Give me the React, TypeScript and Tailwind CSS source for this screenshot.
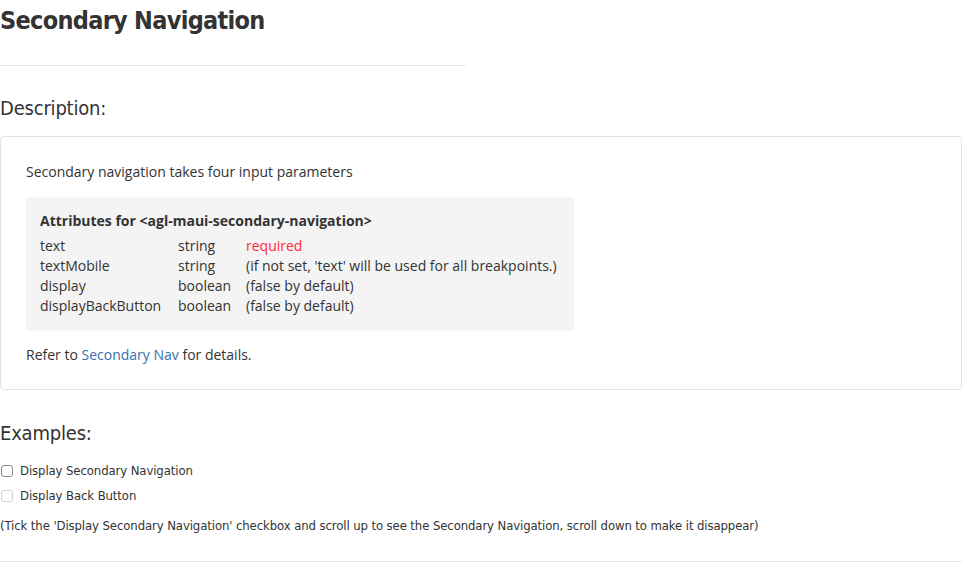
import React from "react";

export default function App() {
  const rows: [string, string, string, boolean][] = [
    ["text", "string", "required", true],
    ["textMobile", "string", "(if not set, 'text' will be used for all breakpoints.)", false],
    ["display", "boolean", "(false by default)", false],
    ["displayBackButton", "boolean", "(false by default)", false],
  ];
  return (
    <div className="w-[962px] bg-white text-[#333] font-['Open_Sans',sans-serif]">
      <div className="w-[466px]">
        <h1 className="pt-[4px] text-[25px] leading-[34px] tracking-[-0.7px] font-bold font-['DejaVu_Sans_Condensed',sans-serif]">
          Secondary Navigation
        </h1>
        <div className="mt-[27px] h-px bg-[#e6e6e6]" />
      </div>
      <h2 className="mt-[29px] text-[20px] leading-[26px] tracking-[-0.2px] font-['DejaVu_Sans_Condensed',sans-serif]">
        Description:
      </h2>
      <div className="mt-[15px] h-[254px] rounded-[4px] border border-[#e3e3e3] px-[25px] pt-[24px]">
        <p className="text-[14px] leading-[22px]">Secondary navigation takes four input parameters</p>
        <div className="mt-[14px] w-[548px] rounded-[4px] bg-[#f4f4f4] px-[14px] pt-[13px] pb-[15px] text-[14px] leading-[20px]">
          <div className="font-bold leading-[22px] mb-[4px]">Attributes for &lt;agl-maui-secondary-navigation&gt;</div>
          {rows.map(([a, b, c, r]) => (
            <div key={a} className="flex">
              <span className="w-[138px]">{a}</span>
              <span className="w-[68px]">{b}</span>
              <span className={r ? "text-[#ff2a3a]" : ""}>{c}</span>
            </div>
          ))}
        </div>
        <p className="mt-[13px] text-[14px] leading-[22px]">
          Refer to <a className="text-[#3a6fb0]">Secondary Nav</a> for details.
        </p>
      </div>
      <h2 className="mt-[30px] text-[20px] leading-[26px] tracking-[-0.2px] font-['DejaVu_Sans_Condensed',sans-serif]">
        Examples:
      </h2>
      <div className="mt-[12px] text-[13px] leading-[18px] tracking-[-0.1px] font-['DejaVu_Sans_Condensed',sans-serif]">
        <label className="flex items-center gap-[7px] h-[25px]">
          <span className="ml-[1px] w-[12px] h-[12px] rounded-[3px] border border-[#8a8a8a] bg-white" />
          <span>Display Secondary Navigation</span>
        </label>
        <label className="flex items-center gap-[7px] h-[25px]">
          <span className="ml-[1px] w-[12px] h-[12px] rounded-[3px] border border-[#d0d0d0] bg-white" />
          <span>Display Back Button</span>
        </label>
        <p className="mt-[9px]">
          (Tick the 'Display Secondary Navigation' checkbox and scroll up to see the Secondary Navigation, scroll down to make it disappear)
        </p>
      </div>
      <div className="mt-[26px] h-px bg-[#e6e6e6]" />
      <div className="h-[25px]" />
    </div>
  );
}
